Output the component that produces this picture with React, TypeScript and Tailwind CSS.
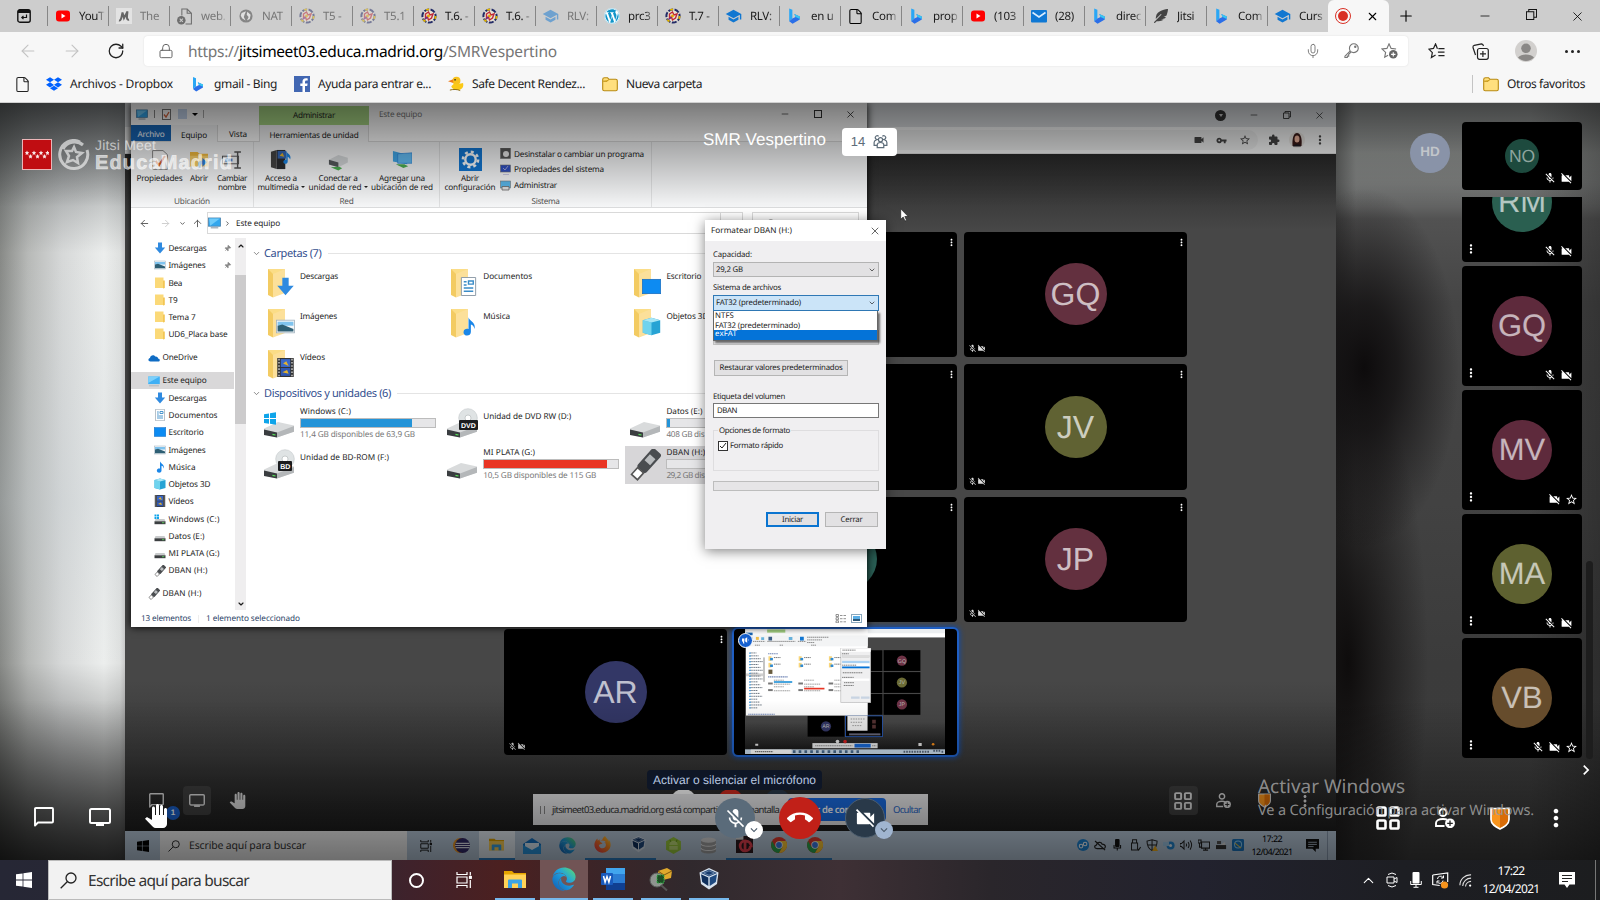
import { useLayoutEffect, useRef } from "react";
import type { ReactNode } from "react";
import {
  MdMicOff, MdVideocamOff, MdCallEnd, MdMoreVert, MdStarBorder, MdSchool, MdPanTool, MdVideocam,
  MdVpnKey, MdExtension, MdKeyboardArrowDown, MdChevronRight,
} from "react-icons/md";
import { FaDropbox, FaWordpress, FaFeatherAlt, FaEdge, FaFirefoxBrowser } from "react-icons/fa";
import { Plus, X, Minus, ArrowLeft, ArrowRight, ArrowUp, ChevronDown, ChevronUp, RotateCw, Lock, Mic, File as Page, Pin } from "lucide-react";

/* Text whose tracking is adjusted so that it fills the given width. */
function T({ w, children, className = "", drop = true }: { w: number; children: string; className?: string; drop?: boolean }) {
  const ref = useRef<HTMLSpanElement>(null);
  useLayoutEffect(() => {
    const el = ref.current;
    if (!el) return;
    el.style.letterSpacing = "0px";
    const natural = el.getBoundingClientRect().width;
    el.style.letterSpacing = `${(w - natural) / children.length}px`;
  }, [w, children]);
  return <span ref={ref} className={`inline-block shrink-0 whitespace-nowrap ${drop ? "translate-y-px" : ""} ${className}`}>{children}</span>;
}

/* ---------- small drawings ---------- */

const Bing = ({ className = "" }) => (
  <svg viewBox="0 0 16 16" className={className}>
    <path d="M3 1l3 1.2v8.2L3 13z" fill="#2aa7f5" />
    <path d="M3 13l3-2.6 3-1.4-1.2-2.8L13 8.4v3L6.2 15.4z" fill="#2b6fe8" />
    <path d="M7.8 6.2L13 8.4v2.4L9 9z" fill="#38c6f0" />
  </svg>
);
const YouTube = () => (
  <svg viewBox="0 0 16 16" className="size-4"><rect x="1" y="2.5" width="14" height="11" rx="3" fill="#f00" /><path d="M6.5 5.5v5l4-2.5z" fill="#fff" /></svg>
);
const Crest = ({ faded = false }) => (
  <svg viewBox="0 0 16 16" className={faded ? "size-4 opacity-50" : "size-4"}>
    <circle cx="8" cy="8" r="6.6" fill="#e6e2d4" stroke="#222a66" strokeWidth="2" strokeDasharray="5 1.5" />
    <circle cx="8" cy="8" r="6.6" fill="none" stroke="#e0b500" strokeWidth="1.8" strokeDasharray="3 11" />
    <path d="M4.500 6l3-2 1.500 3 3-1-1.500 4-3 2-1-3-2 1z" fill="none" stroke="#c02836" strokeWidth="1.4" />
    <circle cx="7.500" cy="8" r="1.400" fill="#e8a800" />
    <path d="M3.500 11.500l3-2.500" stroke="#6a2c8a" strokeWidth="1.400" />
  </svg>
);
const Globe = () => (
  <svg viewBox="0 0 16 16" className="size-[14px]"><circle cx="8" cy="8" r="7.500" fill="#858585" /><path d="M3 4.500L8 2.500 6.500 6 5.500 9l2 4-4-2.500-1.500-3zM9.500 3l3.800 3.500-1 5-3.300 1.500L11 9 8.800 6.500z" fill="#e0e0e0" /></svg>
);
const BadPage = () => (
  <svg viewBox="0 0 16 16" className="size-[17px]"><path d="M5.500 7V1h5l4 4v10H9M10.500 1v4h4" fill="none" stroke="#6e6e6e" /><circle cx="5" cy="11.500" r="4" fill="#6e6e6e" /><path d="M3.500 10l3 3m0-3l-3 3" stroke="#cdcdcd" /></svg>
);
const MLogo = () => (
  <svg viewBox="0 0 16 16" className="size-4"><rect width="16" height="16" fill="#e3e3e3" /><path d="M3 12.500c2 .5 2.500-3 3.500-8L8 10l3.500-6.500c-.5 4-1.500 9 1.500 8" fill="none" stroke="#666" strokeWidth="2" /></svg>
);
const Mail = () => (
  <svg viewBox="0 0 16 16" className="size-4"><rect y="2" width="16" height="12.500" rx="1" fill="#0f78d4" /><path d="M1.500 4.500L8 9l6.500-4.500" fill="none" stroke="#d8ecff" strokeWidth="1.600" /></svg>
);
const Folder = ({ className = "w-4" }) => (
  <svg viewBox="0 0 16 15" className={className}><path d="M.7 2.500q0-1.800 1.800-1.800h3l1.300 1.500h7q1.500 0 1.500 1.500v8.500q0 1.500-1.500 1.500H2.200q-1.500 0-1.500-1.500z" fill="#ffdf7e" stroke="#b98a12" strokeWidth="1.100" /><path d="M1.200 4.200h4L6.800 2.500" fill="#f2c22c" stroke="#b98a12" /></svg>
);
const Duck = () => (
  <svg viewBox="0 0 17 16" className="w-[17px]"><circle cx="9" cy="5" r="4.200" fill="#f8c21c" /><path d="M0 5.500l5.500-2v4z" fill="#ee7d1a" /><path d="M6 8.500h5l5-1c1 4-1 7.500-6 7.500-4 0-6-2-6.500-4z" fill="#fbc916" /><path d="M2 15c3-1 8-1 11 .5" stroke="#8a6a10" fill="none" /><circle cx="7.500" cy="4" r=".9" fill="#222" /></svg>
);
const Facebook = () => (
  <svg viewBox="0 0 16 16" className="size-4"><rect width="16" height="16" fill="#4267b2" /><path d="M11 16V10h2.200l.4-2.500H11V6q0-1.400 1.400-1.400h1.300V2.500C10 1.800 8.500 3.300 8.500 5.500v2H6.300V10h2.200v6z" fill="#fff" /></svg>
);
const WinLogo = ({ className = "", fill = "#fff" }) => (
  <svg viewBox="0 0 16 16" className={className} fill={fill}><path d="M0 2.300l6.600-.9v6.200H0zM7.400 1.300L16 0v7.600H7.400zM0 8.400h6.600v6.200L0 13.700zM7.400 8.400H16V16l-8.600-1.300z" /></svg>
);
const Search = ({ className = "", stroke = "#222" }) => (
  <svg viewBox="0 0 17 17" className={className} fill="none" stroke={stroke} strokeWidth="1.300"><circle cx="11" cy="6" r="5" /><path d="M7.500 9.500L.7 16.300" /></svg>
);
const TaskView = ({ className = "", stroke = "#fff" }) => (
  <svg viewBox="0 0 16 16" className={className} fill="none" stroke={stroke} strokeWidth="1.200"><path d="M1 0v2.500h10V0M1 16v-2.500h10V16M1 5h10v6H1zM14.300 0v3.500M14.300 8v8" /><rect x="13.500" y="4.500" width="1.800" height="1.800" fill={stroke} /></svg>
);
const ExplorerIcon = ({ className = "" }) => (
  <svg viewBox="0 0 22 19" className={className}><path d="M0 1h8l2 2h12v15H0z" fill="#e5a500" /><path d="M0 4.500h22V18H0z" fill="#ffd257" /><path d="M4 18v-7.500q0-1 1-1h12q1 0 1 1V18h-4v-4.500H8V18z" fill="#3aa3e6" /></svg>
);
const EdgeIcon = ({ className = "" }) => <FaEdge className={className} fill="url(#edgeFill)" />;
const Vbox = ({ className = "" }) => (
  <svg viewBox="0 0 20 22" className={className}><path d="M10 0l9.500 4.500L18 16l-8 5.500L2 16 .5 4.500z" fill="#d7e2ee" /><path d="M10 1.500L18 5l-8 3.500L2 5z" fill="#163a6c" /><path d="M2 6.200l7.300 3.300v8.500L3.200 14z" fill="#0f2f5c" /><path d="M18 6.200l-7.300 3.300v8.500l6.100-4z" fill="#1f4a80" /><path d="M4.500 5L10 2.800 15.500 5 10 7.300z" fill="none" stroke="#9db7d3" strokeWidth=".6" /></svg>
);
const Chrome = ({ className = "" }) => (
  <svg viewBox="0 0 16 16" className={className}><circle cx="8" cy="8" r="8" fill="#e33b2e" /><path d="M1.100 4A8 8 0 0 0 8 16l3.500-6H4.500z" fill="#2da94f" /><path d="M15 4H8l3.500 6L8 16A8 8 0 0 0 15 4z" fill="#fcc934" /><circle cx="8" cy="8" r="3.700" fill="#fff" /><circle cx="8" cy="8" r="2.900" fill="#3b7de8" /></svg>
);
const ChatIcon = ({ className = "" }) => (
  <svg viewBox="0 0 20 20" className={className} fill="none" stroke="currentColor" strokeWidth="1.900"><path d="M1 18.500V2q0-1 1-1h16q1 0 1 1v12.500q0 1-1 1H4z" strokeLinejoin="round" /></svg>
);
const ScreenIcon = ({ className = "" }) => (
  <svg viewBox="0 0 22 18" className={className}><rect x="1" y="1" width="20" height="14" rx="1.500" fill="none" stroke="currentColor" strokeWidth="2" /><path d="M7 15h8v3H7z" fill="currentColor" /></svg>
);
const TilesIcon = ({ className = "" }) => (
  <svg viewBox="0 0 24 24" className={className} fill="none" stroke="currentColor" strokeWidth="2.600"><rect x="1.500" y="1.500" width="8" height="8" rx="1.300" /><rect x="14.500" y="1.500" width="8" height="8" rx="1.300" /><rect x="1.500" y="14.500" width="8" height="8" rx="1.300" /><rect x="14.500" y="14.500" width="8" height="8" rx="1.300" /></svg>
);
const InviteIcon = ({ className = "" }) => (
  <svg viewBox="0 0 20 20" className={className} fill="none" stroke="currentColor" strokeWidth="1.900"><circle cx="8" cy="4.500" r="3.500" /><path d="M9.500 18H1v-3c0-2.500 3-4 7-4 1.500 0 3 .2 4 .7" /><circle cx="15" cy="15.300" r="4.900" fill="currentColor" stroke="none" /><path d="M15 12.500v5.600M12.200 15.300h5.600" stroke="#222" strokeWidth="1.300" /></svg>
);
const Shield = ({ className = "" }) => (
  <svg viewBox="0 0 20 23" className={className}><path d="M1 1.500h18v11c0 5-5 7.500-9 9.500-4-2-9-4.500-9-9.500z" fill="#f7941d" stroke="currentColor" strokeWidth="1.700" /><path d="M10 2.500h8v10c0 4-4 6.500-8 8.300z" fill="#d96c07" /></svg>
);
const PcIcon = ({ className = "" }) => (
  <svg viewBox="0 0 12 11" className={className}><rect x=".4" y=".9" width="11.200" height="7.600" fill="#33a7ee" stroke="#4a7ea6" strokeWidth=".7" /><path d="M1 1.500h10L2 8z" fill="#6fcbfa" /><path d="M2.500 10h7" stroke="#8a98a5" /></svg>
);

/* Icons of folders and drives, drawn in a 12 by 12 box */
function Glyph({ kind, className = "size-3" }: { kind: string; className?: string }) {
  return (
    <svg viewBox="0 0 12 12" className={`shrink-0 ${className}`}>
      {kind === "down" && <path d="M4 .5h4v5h3.200L6 11.500.8 5.500H4z" fill="#2f8ae0" />}
      {kind === "image" && <><rect x=".3" y="2" width="11.400" height="8" fill="#f3f6f8" stroke="#9fb0bd" strokeWidth=".5" /><path d="M1 3h10v2.500H1z" fill="#7fc3ee" /><path d="M1 5.500l3-.8 7 2.800v1.700H1z" fill="#2e5f74" /></>}
      {kind === "folder" && <><path d="M1 .5h8.500V11H1z" fill="#fbd978" /><path d="M9 3.500h1.800V11L9 11.400z" fill="#f3c654" /></>}
      {kind === "cloud" && <path d="M2.500 9.500C0 9.500-.3 6.500 2 6c.3-3 4-3.800 5.200-1.500C9.500 4.200 10.300 6 10 6.500c2.300.2 2.300 3 .3 3z" fill="#0f6cc4" />}
      {kind === "pc" && <><rect x=".2" y="1.500" width="11.600" height="7.600" fill="#3fb0f5" /><path d="M.2 1.500h11.600L.2 8z" fill="#7cd0fb" /><path d="M1 10.800h10" stroke="#a8b0b8" strokeWidth=".8" /></>}
      {kind === "doc" && <><path d="M1.500.3h9v11.400h-9z" fill="#fff" stroke="#8a98a5" strokeWidth=".6" /><path d="M3 3h1.800M6 2.500h3v2H6zM3 5h1.800M3 7h6M3 9h6" stroke="#3a8cc8" strokeWidth=".9" fill="none" /></>}
      {kind === "desk" && <rect x=".2" y="1.500" width="11.600" height="9" fill="#0d8bf2" stroke="#1a6fc0" strokeWidth=".5" />}
      {kind === "music" && <path d="M6 .2c.5 2.300 5 3.300 3.700 7.300-.2-1.700-1-2.500-2.200-2.800V9.500c0 3.200-5.200 2.800-4.600-.2.200-1.600 1.700-2.100 3.100-1.700z" fill="#1a86e8" />}
      {kind === "cube" && <><path d="M.5 2L6 .5 11.500 2v8L6 11.500.5 10z" fill="#27a3d4" /><path d="M.5 2L6 3.500V11.500L.5 10z" fill="#6fd3ee" /><path d="M.5 2L6 .5 11.500 2 6 3.500z" fill="#a7e6f5" /></>}
      {kind === "video" && <><rect x=".8" width="10.400" height="12" fill="#333" /><rect x="3" y=".7" width="6" height="5" fill="#3a68c8" /><rect x="3" y="6.300" width="6" height="5" fill="#2f57b0" /><path d="M4.500 3.500l2-1.500 1.500 3zM4 9l3-1.500L8 10z" fill="#e5b32c" /><path d="M1.900.5v11M10.100.5v11" stroke="#ddd" strokeWidth=".8" strokeDasharray="1 1" /></>}
      {(kind === "drive" || kind === "windrive") && <><path d="M1.500 6h9l1 2.500H.5z" fill="#c9cbcc" /><path d="M.5 8.300h11v2.900H.5z" fill="#3c3f41" /><path d="M8 9.700h2.300" stroke="#5be05b" strokeWidth=".8" /></>}
      {kind === "windrive" && <path d="M.5 1.500h2v2h-2zM3 1.500h2v2H3zM.5 4h2v2h-2zM3 4h2v2H3z" fill="#10a4ea" />}
      {kind === "usb" && <g transform="rotate(42 6 6)"><rect x="3.900" y="-1" width="4.400" height="9.500" rx="1" fill="#4a4d50" /><rect x="4.700" y="1.800" width="2.800" height="3" fill="#b9bcbe" /><path d="M4.600 8.600h3V12H4.600z" fill="#fff" stroke="#555" strokeWidth=".6" /></g>}
    </svg>
  );
}
const BigFolder = ({ kind }: { kind: string }) => (
  <div className="relative h-[30px] w-7">
    <svg viewBox="0 0 28 30" className="h-[30px] w-7"><path d="M1 1h17v24H4z" fill="#fbdd87" /><path d="M1 1l5 5v23.500L1 27z" fill="#f3cb62" /><path d="M6 6L18 1v24L6 29.500z" fill="#fce09a" /></svg>
    <Glyph kind={kind} className="absolute bottom-0.5 right-0 size-[19px]" />
  </div>
);
function BigDrive({ kind }: { kind: string }) {
  if (kind === "usb") return <Glyph kind="usb" className="size-8" />;
  return (
    <svg viewBox="0 0 32 30" className="h-[30px] w-8">
      {(kind === "DVD" || kind === "BD") && <><circle cx="22" cy="10" r="9.300" fill="#dfe3e4" stroke="#c3c8ca" strokeWidth=".6" /><circle cx="22" cy="10" r="3" fill="#fff" stroke="#b5babc" strokeWidth=".7" /></>}
      <path d="M1 20.500l14-6.500 16 3.500v6L14 29.500 1 26.500z" fill="#d9dbdc" />
      <path d="M1 21.500l13 3V29.500L1 27z" fill="#3a3d40" /><path d="M14 24.500l17-6.500v5.800L14 29.500z" fill="#b4b7b9" /><path d="M9.500 26.300l3 .7" stroke="#58e058" strokeWidth="1.200" />
      {kind === "win" && <path d="M1 6.200l5-.8V10H1zM7 5.200l6-.9V10H7zM1 11h5v4.700l-5-.8zM7 11h6v5.700l-6-.9z" fill="#0fa5ea" />}
      {(kind === "DVD" || kind === "BD") && <><rect x={kind === "DVD" ? 13 : 15} y="12" width={kind === "DVD" ? 19 : 14} height="10" rx="1" fill="#1b1c1e" /><text x="22.300" y="19.600" fontSize="7" fill="#fff" textAnchor="middle" fontFamily="Liberation Sans, sans-serif" fontWeight="bold">{kind}</text></>}
    </svg>
  );
}

/* ---------- browser chrome ---------- */

const tabs: [ReactNode, string, boolean][] = [
  [<YouTube />, "YouT", false], [<MLogo />, "The", true], [<BadPage />, "web.", true], [<Globe />, "NAT", true],
  [<Crest faded />, "T5 -", true], [<Crest faded />, "T5.1", true], [<Crest />, "T.6. -", false], [<Crest />, "T.6. -", false],
  [<MdSchool className="size-[18px] text-[#1177d1] opacity-50" />, "RLV:", true],
  [<FaWordpress className="size-4 rounded-full bg-white text-[#1195c9]" />, "prc3", false], [<Crest />, "T.7 -", false],
  [<MdSchool className="size-[18px] text-[#1177d1]" />, "RLV:", false], [<Bing className="size-[18px]" />, "en u", false],
  [<Page className="size-[17px]" strokeWidth={1.5} />, "Com", false], [<Bing className="size-[18px]" />, "prop", false],
  [<YouTube />, "(103", false], [<Mail />, "(28)", false], [<Bing className="size-[18px]" />, "direc", false],
  [<FaFeatherAlt className="size-[14px] text-[#444]" />, "Jitsi", false], [<Bing className="size-[18px]" />, "Com", false],
  [<MdSchool className="size-[18px] text-[#1177d1]" />, "Curs", false],
];

const TabStrip = () => (
  <div className="flex h-8 shrink-0 items-center bg-[#cdcdcd] pl-[17px]">
    <svg viewBox="0 0 14 14" className="mr-4 size-3.5"><rect x=".8" y=".8" width="12.400" height="12.400" rx="2" fill="none" stroke="#111" strokeWidth="1.400" /><path d="M1 1h12v3H1z" fill="#111" /><path d="M9.500 5.500v3H5M6.500 6.800L4.800 8.500l1.700 1.700" fill="none" stroke="#111" strokeWidth="1.200" /></svg>
    {tabs.map(([icon, label, dim], i) => (
      <div key={i} className="flex h-5 w-[61px] shrink-0 items-center border-l border-[#868686] pl-1.5">
        <span className="flex w-[17px] shrink-0 justify-center">{icon}</span>
        <span className={`ml-2 w-[26px] overflow-hidden whitespace-nowrap pt-px text-[11.5px] tracking-tight [mask-image:linear-gradient(to_right,#000_70%,transparent)] ${dim ? "text-[#777]" : "text-[#1a1a1a]"}`}>{label}</span>
      </div>
    ))}
    <div className="flex h-8 w-[61px] shrink-0 items-center rounded-t-md bg-[#f7f7f7] pl-[7px]">
      <span className="flex size-4 items-center justify-center rounded-full border border-[#d93025]"><span className="size-[10px] rounded-full bg-[#d93025]" /></span>
      <X className="ml-[15px] size-[13px]" strokeWidth={2} />
    </div>
    <Plus className="ml-2 size-[18px]" strokeWidth={1.5} />
    <div className="ml-auto flex">
      <span className="flex w-[46px] justify-center"><Minus className="size-3.5" strokeWidth={1.300} /></span>
      <span className="flex w-[46px] justify-center"><svg viewBox="0 0 12 12" className="size-[11px]" fill="none" stroke="#111"><path d="M.5 3h8v8.500h-8zM3 3V.5h8.500V9H9" strokeWidth="1.100" /></svg></span>
      <span className="flex w-[46px] justify-center"><X className="size-[15px]" strokeWidth={1.300} /></span>
    </div>
  </div>
);

const Toolbar = () => (
  <div className="flex h-[34px] shrink-0 items-center pl-1.5 pr-1.5 pt-1">
    <span className="flex w-11 justify-center text-[#c3c3c3]"><ArrowLeft className="size-5" strokeWidth={1.300} /></span>
    <span className="flex w-11 justify-center text-[#c3c3c3]"><ArrowRight className="size-5" strokeWidth={1.300} /></span>
    <span className="flex w-11 justify-center text-[#222]"><RotateCw className="size-[18px]" strokeWidth={1.700} /></span>
    <div className="ml-1.5 flex h-[30px] flex-1 items-center rounded bg-white shadow-[0_0_2px_#ddd]">
      <Lock className="ml-[14px] size-4 text-[#666]" strokeWidth={1.500} />
      <div className="ml-[14px] flex text-[15.5px]">
        <T w={51} className="text-[#767676]">https://</T><T w={204} className="text-black">jitsimeet03.educa.madrid.org</T><T w={114} className="text-[#767676]">/SMRVespertino</T>
      </div>
      <div className="ml-auto flex text-[#767676]">
        <span className="flex w-[38px] justify-center"><Mic className="size-4" strokeWidth={1.400} /></span>
        <span className="flex w-[38px] justify-center"><svg viewBox="0 0 16 16" className="size-[15px]" fill="none" stroke="currentColor" strokeWidth="1.200"><circle cx="10.500" cy="5.500" r="4.700" /><circle cx="12" cy="4" r=".7" /><path d="M6.700 8.300L1 14v1.500h2.500V14H5v-2l2.700-2.500" /></svg></span>
        <span className="flex w-[38px] justify-center"><svg viewBox="0 0 18 17" className="w-[17px]" fill="none" stroke="currentColor" strokeWidth="1.200"><path d="M16 6.300L10.700 5.700 8.500.9 6.300 5.700 1 6.300l3.900 3.600-1 5.200 3.600-2" /><circle cx="13" cy="12" r="4.500" fill="#666" stroke="none" /><path d="M13 9.700v4.600M10.700 12h4.600" stroke="#fff" /></svg></span>
      </div>
    </div>
    <span className="ml-1.5 flex w-11 justify-center"><svg viewBox="0 0 18 17" className="w-[17px]" fill="none" stroke="#222" strokeWidth="1.300"><path d="M10 6L8 1 5.800 5.800 1 6.500l3.600 3.700-1 5.200L8 12.800M11 6h6.500M10.500 9.700h7M11 13.400h6.500" /></svg></span>
    <span className="flex w-11 justify-center"><svg viewBox="0 0 17 17" className="w-[17px]" fill="none" stroke="#222" strokeWidth="1.200"><rect x="5.500" y="5.500" width="10.800" height="10.800" rx="2" /><path d="M10.900 8v6M8 10.900h6M3.500 12L1 4.500Q.7 2.800 2.300 2.300L9.500.8Q11 .7 11.500 3" /></svg></span>
    <span className="ml-0.5 flex w-11 justify-center"><svg viewBox="0 0 22 22" className="w-[22px]"><circle cx="11" cy="11" r="11" fill="#d2d0ce" /><circle cx="11" cy="8.300" r="4.800" fill="#8a8886" /><path d="M3 17.500c3-4 13-4 16 0a11 11 0 0 1-16 0z" fill="#8a8886" /></svg></span>
    <span className="ml-0.5 flex w-11 justify-center gap-[3px]"><i className="size-[3px] rounded-full bg-[#222]" /><i className="size-[3px] rounded-full bg-[#222]" /><i className="size-[3px] rounded-full bg-[#222]" /></span>
  </div>
);

const bookmarks: [ReactNode, string, number][] = [
  [<FaDropbox className="size-4 text-[#0061ff]" />, "Archivos - Dropbox", 103],
  [<Bing className="size-[18px]" />, "gmail - Bing", 63],
  [<Facebook />, "Ayuda para entrar e...", 113],
  [<Duck />, "Safe Decent Rendez...", 113],
  [<Folder />, "Nueva carpeta", 76],
];
const Bookmarks = () => (
  <div className="flex h-9 shrink-0 items-center pl-[14px] pr-[15px] text-[12px] text-[#222]">
    <Page className="mr-[15px] size-[17px]" strokeWidth={1.500} />
    <div className="flex gap-[17px]">
      {bookmarks.map(([icon, label, w]) => (
        <div key={label} className="flex items-center gap-2"><span className="flex w-4 justify-center">{icon}</span><T w={w} drop={false}>{label}</T></div>
      ))}
    </div>
    <div className="ml-auto flex items-center gap-2 border-l border-[#c4c4c4] pl-2.5"><Folder /><T w={78} drop={false}>Otros favoritos</T></div>
  </div>
);

/* ---------- file explorer in the shared screen ---------- */

function RibbonButton({ w, icon, lines, arrow = false }: { w: string; icon: ReactNode; lines: [string, number][]; arrow?: boolean }) {
  return (
    <div className={`flex shrink-0 flex-col items-center ${w}`}>
      <div className="flex h-[23px] items-center">{icon}</div>
      <div className="mt-[2px] flex flex-col items-center leading-[9.4px]">
        {lines.map(([text, width], i) => (
          <div key={text} className="flex items-center gap-[2px]">
            <T w={width}>{text}</T>
            {arrow && i === 1 && <i className="border-x-2 border-t-[2.5px] border-x-transparent border-t-[#222]" />}
          </div>
        ))}
      </div>
    </div>
  );
}
const GroupLabel = ({ w, children }: { w: number; children: string }) => (
  <div className="mt-auto flex h-[11px] items-center justify-center text-[#555]"><T w={w}>{children}</T></div>
);

const navItems: [string, string, number, number][] = [
  ["down", "Descargas", 38, 2], ["image", "Imágenes", 37, 2], ["folder", "Bea", 13.5, 1], ["folder", "T9", 9, 1], ["folder", "Tema 7", 27, 1],
  ["folder", "UD6_Placa base", 59, 1], ["cloud", "OneDrive", 35, 0], ["pc", "Este equipo", 44, 0], ["down", "Descargas", 38, 1],
  ["doc", "Documentos", 49, 1], ["desk", "Escritorio", 35, 1], ["image", "Imágenes", 37, 1], ["music", "Música", 27, 1], ["cube", "Objetos 3D", 42, 1],
  ["video", "Vídeos", 25, 1], ["windrive", "Windows (C:)", 51, 1], ["drive", "Datos (E:)", 36, 1], ["drive", "MI PLATA (G:)", 51, 1],
  ["usb", "DBAN (H:)", 39, 1], ["usb", "DBAN (H:)", 39, 0],
];
const folders: [string, string, number][] = [
  ["down", "Descargas", 38], ["doc", "Documentos", 49], ["desk", "Escritorio", 35], ["image", "Imágenes", 37], ["music", "Música", 27],
  ["cube", "Objetos 3D", 42], ["video", "Vídeos", 25],
];
type Drive = { kind: string; name: string; w: number; free?: string; fw?: number; fill?: string; sel?: boolean };
const drives: Drive[] = [
  { kind: "win", name: "Windows (C:)", w: 51, free: "11,4 GB disponibles de 63,9 GB", fw: 115, fill: "w-[111px] bg-[#2494d8]" },
  { kind: "DVD", name: "Unidad de DVD RW (D:)", w: 88 },
  { kind: "plain", name: "Datos (E:)", w: 36, free: "408 GB dis", fw: 38, fill: "w-[3px] bg-[#2494d8]" },
  { kind: "BD", name: "Unidad de BD-ROM (F:)", w: 89 },
  { kind: "plain", name: "MI PLATA (G:)", w: 52, free: "10,5 GB disponibles de 115 GB", fw: 113, fill: "w-[123px] bg-[#e93524]" },
  { kind: "usb", name: "DBAN (H:)", w: 39, free: "29,2 GB dis", fw: 38, fill: "w-0", sel: true },
];
const SectionHeader = ({ text, w }: { text: string; w: number }) => (
  <div className="flex h-5 items-center pl-1.5 text-[11px] text-[#34508f]">
    <ChevronDown className="mr-[3px] size-[9px] text-[#666]" strokeWidth={2} /><T w={w}>{text}</T><i className="ml-1.5 h-px flex-1 bg-[#e4e4e4]" />
  </div>
);

const Explorer = () => (
  <div className="absolute left-1.5 top-0 flex h-[524px] w-[736px] flex-col overflow-hidden bg-white text-[8.2px] text-[#1c1c1c] shadow-[0_0_8px_#000]">
    <div className="flex h-[22px] shrink-0 items-center pl-[5px] text-[#777]">
      <PcIcon className="w-3" />
      <i className="ml-1.5 h-2 w-px bg-[#888]" />
      <svg viewBox="0 0 9 11" className="ml-[7px] w-[9px]"><rect x=".5" y=".5" width="8" height="10" fill="#fff" stroke="#777" /><path d="M2 5.500l2 2.500 3-5" fill="none" stroke="#d8643c" strokeWidth="1.300" /></svg>
      <i className="ml-[7px] h-2.5 w-[9px] bg-[#c5d6ee]" />
      <i className="ml-[5px] border-x-[3px] border-t-[3px] border-x-transparent border-t-black" />
      <i className="ml-[5px] h-2 w-px bg-[#aaa]" />
      <div className="ml-[55px] flex h-[19px] w-[110px] items-center justify-center self-end bg-[#a6d483] text-[#222]"><T w={42}>Administrar</T></div>
      <T w={43} className="ml-2.5">Este equipo</T>
      <div className="ml-auto flex text-[#222]">
        <span className="flex w-[33px] justify-center"><Minus className="size-2.5" strokeWidth={1.500} /></span>
        <span className="flex w-[33px] items-center justify-center"><i className="size-2 border border-[#333]" /></span>
        <span className="flex w-[33px] justify-center"><X className="size-[11px]" strokeWidth={1.700} /></span>
      </div>
    </div>
    <div className="flex h-[17px] shrink-0 border-b border-[#dcdcdc] leading-[13px]">
      <div className="flex w-10 items-center justify-center bg-[#1765b5] pt-px text-white"><T w={27}>Archivo</T></div>
      <div className="-mb-px flex w-[47px] items-center justify-center border-r border-[#dcdcdc] bg-[#f5f6f7] pt-px"><T w={26}>Equipo</T></div>
      <div className="flex w-10 items-center justify-center pt-px"><T w={18}>Vista</T></div>
      <div className="-mb-px ml-px flex w-[110px] items-center justify-center border-x border-[#dcdcdc] bg-[#f5f6f7] pt-px"><T w={89}>Herramientas de unidad</T></div>
    </div>
    <div className="flex h-[66px] shrink-0 border-b border-[#dadbdc] bg-[#f5f6f7]">
      <div className="flex w-[123px] flex-col border-r border-[#dfe0e1] pt-1.5">
        <div className="flex">
          <RibbonButton w="w-[57px]" lines={[["Propiedades", 46]]} icon={<svg viewBox="0 0 16 20" className="h-5"><path d="M.6.6H11l4.400 4v14.800H.6z" fill="#fff" stroke="#888" /><path d="M3.500 11l3.500 4 6-9" fill="none" stroke="#e0642d" strokeWidth="2" /></svg>} />
          <RibbonButton w="w-[22px]" lines={[["Abrir", 18]]} icon={<svg viewBox="0 0 20 19" className="h-[18px]"><path d="M0 1h8l2 2h10v13H0z" fill="#f5bd3f" /><path d="M0 5h20v11H0z" fill="#ffd56b" /><path d="M9 18v-5q0-3 4-3V7l5 5-5 4.500V14q-2 0-2 4z" fill="#2b83d8" /></svg>} />
          <RibbonButton w="w-[44px]" lines={[["Cambiar", 30], ["nombre", 28]]} icon={<svg viewBox="0 0 21 19" className="h-[18px]" fill="none" stroke="#555"><rect x=".5" y="5.500" width="17" height="8" /><path d="M3 9.500h8" stroke="#2b83d8" strokeWidth="3" /><path d="M13 1h7M13 18h7M16.500 1v17" strokeWidth="1.500" /></svg>} />
        </div>
        <GroupLabel w={36}>Ubicación</GroupLabel>
      </div>
      <div className="flex w-[186px] flex-col border-r border-[#dfe0e1] pt-1.5">
        <div className="flex">
          <RibbonButton w="w-[54px]" arrow lines={[["Acceso a", 32], ["multimedia", 41]]} icon={<svg viewBox="0 0 23 23" className="h-[22px]"><path d="M1 3l6-2v20l-6-2z" fill="#444" /><path d="M7 1h9v20H7z" fill="#2b2d30" /><rect x="8" y="2" width="9" height="8" fill="#3568b8" /><path d="M10 7l3-3 2 4z" fill="#e5b32c" /><path d="M17 2c1 3 6 4 4 9-.5-2-1.500-2.500-2.500-3v5c0 3.500-5 3-4.500 0 .3-1.500 2-2 3-1.600z" fill="#1a86e8" /></svg>} />
          <RibbonButton w="w-[60px]" arrow lines={[["Conectar a", 39], ["unidad de red", 53]]} icon={<svg viewBox="0 0 22 18" className="mt-1.5 h-[17px]"><path d="M1 6l10-5 10 3v5l-10 5L1 11z" fill="#d5d8da" /><path d="M1 6l10 3v5L1 11z" fill="#55595c" /><path d="M3 14l8 3.500 4-2.500-3-1.500" fill="#4cb052" /></svg>} />
          <RibbonButton w="w-[68px]" lines={[["Agregar una", 46], ["ubicación de red", 62]]} icon={<svg viewBox="0 0 22 20" className="h-[19px]"><path d="M1 1l15 4v10L1 12z" fill="#41a8ea" /><path d="M6 4l15-1v11L6 14z" fill="#63bdf5" stroke="#2b83d8" strokeWidth=".7" /><path d="M4 15l8 4 5-2-4-2z" fill="#4cb052" /></svg>} />
        </div>
        <GroupLabel w={14}>Red</GroupLabel>
      </div>
      <div className="flex w-[212px] flex-col border-r border-[#dfe0e1]">
        <div className="flex">
          <div className="pt-1.5"><RibbonButton w="w-[60px]" lines={[["Abrir", 18], ["configuración", 51]]} icon={<svg viewBox="0 0 23 23" className="h-[23px]"><rect width="23" height="23" fill="#1277d3" /><circle cx="11.500" cy="11.500" r="5.200" fill="none" stroke="#fff" strokeWidth="2.400" /><circle cx="11.500" cy="11.500" r="7.600" fill="none" stroke="#fff" strokeWidth="2.600" strokeDasharray="3 2.970" /></svg>} /></div>
          <div className="flex flex-col pt-1">
            {([["Desinstalar o cambiar un programa", 130], ["Propiedades del sistema", 90], ["Administrar", 43]] as [string, number][]).map(([text, w], i) => (
              <div key={text} className="flex h-[15.7px] items-center gap-[3px]">
                <svg viewBox="0 0 11 11" className="size-[11px]"><rect x=".5" y={i ? 1 : 0} width="10" height={i ? 7 : 10.500} fill={i === 0 ? "#555" : i === 1 ? "#2f4fbf" : "#58b5e8"} stroke="#777" strokeWidth=".6" />{i === 0 ? <circle cx="6" cy="6" r="3" fill="#e8e8e8" /> : <path d={i === 1 ? "M3 10.500h6M3 4l2 2 3-4" : "M2 10V6.500h7V10z"} fill={i === 1 ? "none" : "#ddd"} stroke={i === 1 ? "#bbd" : "#666"} strokeWidth=".8" />}</svg>
                <T w={w}>{text}</T>
              </div>
            ))}
          </div>
        </div>
        <GroupLabel w={28}>Sistema</GroupLabel>
      </div>
    </div>
    <div className="flex h-[30px] shrink-0 items-start pl-[3px] pt-1">
      <div className="flex h-[22px] items-center text-[#555]">
        <span className="flex w-5 justify-center"><ArrowLeft className="size-[11px]" /></span>
        <span className="flex w-[22px] justify-center text-[#ccc]"><ArrowRight className="size-[11px]" /></span>
        <span className="flex w-3 justify-center"><ChevronDown className="size-[7px]" strokeWidth={3} /></span>
        <span className="flex w-[19px] justify-center"><ArrowUp className="size-[11px]" /></span>
      </div>
      <div className="flex h-[22px] w-[536px] items-center border border-[#d9d9d9]">
        <PcIcon className="w-[13px]" /><ChevronDown className="ml-[3px] size-[7px] -rotate-90 text-[#555]" strokeWidth={3} /><T w={44} className="ml-[5px]">Este equipo</T>
        <i className="ml-auto h-full w-[22px] border-l border-[#d9d9d9]" />
      </div>
      <div className="ml-[9px] flex h-[22px] w-[107px] items-center border border-[#d9d9d9] pl-3"><Search className="size-[9px]" stroke="#777" /></div>
    </div>
    <div className="flex min-h-0 flex-1">
      <div className="w-[103px] shrink-0 pt-[1.500px]">
        {navItems.map(([kind, label, w, level], i) => (
          <div key={i} className={`flex h-[17.280px] items-center ${level ? "pl-[22.500px]" : "mt-[5.800px] pl-[16.500px]"} ${label === "Este equipo" ? "bg-[#d9d8d9]" : ""}`}>
            <Glyph kind={kind} className="mr-[3px] size-3" /><T w={w}>{label}</T>
            {level === 2 && <Pin className="ml-auto mr-[3px] size-[7px] rotate-45 fill-[#888] text-[#888]" />}
          </div>
        ))}
      </div>
      <div className="ml-px flex w-[11px] shrink-0 flex-col items-center bg-[#efeeef]">
        <ChevronUp className="mt-1 size-2 shrink-0" strokeWidth={3.500} />
        <i className="mt-[25px] h-[149px] w-full bg-[#cccbcc]" />
        <ChevronDown className="mb-0.5 mt-auto size-2 shrink-0" strokeWidth={3.500} />
      </div>
      <div className="min-w-0 flex-1 overflow-hidden pt-[5px]">
        <SectionHeader text="Carpetas (7)" w={57.500} />
        <div className="grid w-[550px] grid-cols-[183.200px_183.200px_183.200px] pl-[13px]">
          {folders.map(([kind, label, w]) => (
            <div key={label} className="flex h-[40.400px] pl-2 pt-[5px]"><BigFolder kind={kind} /><T w={w} className="ml-[5px] mt-[2px] leading-3">{label}</T></div>
          ))}
        </div>
        <div className="-mt-px"><SectionHeader text="Dispositivos y unidades (6)" w={127} /></div>
        <div className="grid w-[550px] grid-cols-[183.200px_183.200px_183.200px] pl-[13px]">
          {drives.map((d) => (
            <div key={d.name} className={`flex h-[40.400px] border-t-2 border-transparent bg-clip-padding pl-1 ${d.sel ? "bg-[#d7d6d8]" : ""}`}>
              <div className="pt-[3px]"><BigDrive kind={d.kind} /></div>
              <div className={`ml-[5px] flex flex-col items-start ${d.free ? "" : "pt-[5px]"}`}>
                <T w={d.w} className="leading-3">{d.name}</T>
                {d.free && <>
                  <div className="mt-px h-[10px] w-[136px] border border-[#bcbcbc] bg-[#e6e6e8]"><div className={`h-full ${d.fill}`} /></div>
                  <T w={d.fw!} drop={false} className="leading-[13px] text-[#777]">{d.free}</T>
                </>}
              </div>
            </div>
          ))}
        </div>
      </div>
    </div>
    <div className="flex h-[17px] shrink-0 items-center pl-2.5 pr-[5px] text-[#2a3f66]">
      <T w={50}>13 elementos</T><i className="mx-[7px] h-2 w-px bg-[#eee]" /><T w={94}>1 elemento seleccionado</T>
      <svg viewBox="0 0 12 9" className="ml-auto w-3" fill="none" stroke="#777" strokeWidth=".8"><path d="M1 .5h2.500v2H1zM1 3.700h2.500v2H1zM1 6.800h2.500v2H1zM5 1.500h2.500M8.500 1.500H11M5 4.700h2.500M8.500 4.700H11M5 7.800h2.500M8.500 7.800H11" /></svg>
      <svg viewBox="0 0 11 9" className="ml-1 w-[11px]"><rect x=".5" y=".5" width="10" height="8" fill="#fff" stroke="#8aa8bd" /><path d="M2 2h7v3H2z" fill="#5aaee6" /><path d="M2 5h7v2H2z" fill="#2c5878" /></svg>
    </div>
  </div>
);

const FormatDialog = () => (
  <div className="absolute left-[580px] top-[117px] flex h-[329px] w-[181px] flex-col bg-[#f0eff1] text-[7.8px] text-[#1c1c1c] shadow-[0_2px_12px_rgba(0,0,0,0.5)]">
    <div className="flex h-[21px] items-center justify-between bg-white pl-1.5 pr-[5px]"><T w={81} className="text-[8.2px]">Formatear DBAN (H:)</T><X className="size-[12px] text-[#333]" strokeWidth={1.500} /></div>
    <div className="flex flex-col pl-2 pr-[7px]">
      <T w={39} className="mt-2 self-start leading-[10px]">Capacidad:</T>
      <div className="mt-[3px] flex h-[15px] items-center justify-between border border-[#b3b3b3] bg-[#e2e1e3] px-[2px]"><T w={27}>29,2 GB</T><ChevronDown className="size-2" /></div>
      <T w={68} className="mt-[5px] self-start leading-[10px]">Sistema de archivos</T>
      <div className="relative mt-[3px]">
        <div className="flex h-4 items-center justify-between border border-[#2f78b5] bg-[#cbe4f8] px-[2px]"><T w={85}>FAT32 (predeterminado)</T><ChevronDown className="size-2" /></div>
        <div className="absolute left-0 top-4 z-10 w-[165px] border-x border-b border-[#666] bg-white leading-[9.500px] shadow-[2px_2px_2px_rgba(0,0,0,0.55)]">
          <div className="flex h-[9.500px] items-center pl-px"><T w={19}>NTFS</T></div>
          <div className="flex h-[9.500px] items-center pl-px"><T w={85}>FAT32 (predeterminado)</T></div>
          <div className="flex h-[9.500px] items-center bg-[#0473d8] pl-px text-white"><T w={22} drop={false}>exFAT</T></div>
        </div>
      </div>
      <div className="mt-[19px] h-[15px] border border-[#c3c3c3] bg-[#e6e5e7]" />
      <div className="ml-px mt-[15px] flex h-4 w-[134px] items-center justify-center border border-[#b5b5b5] bg-[#e2e1e3]"><T w={123}>Restaurar valores predeterminados</T></div>
      <T w={72} className="mt-[15px] self-start leading-[10px]">Etiqueta del volumen</T>
      <div className="mt-[2px] flex h-[15px] items-center border border-[#777] bg-white pl-[3px]"><T w={20}>DBAN</T></div>
      <div className="mt-3 h-[41px] border border-[#dedddf] px-1">
        <div className="-mt-[5px] flex"><T w={73} className="bg-[#f0eff1] px-px leading-[9px]">Opciones de formato</T></div>
        <div className="mt-[5px] flex items-center gap-[2px]"><span className="flex size-[10px] items-center justify-center border border-[#333] bg-white"><svg viewBox="0 0 8 8" className="size-2"><path d="M1 4l2 2 4-5" fill="none" stroke="#222" /></svg></span><T w={53}>Formato rápido</T></div>
      </div>
      <div className="mt-2.5 h-2.5 border border-[#bdbdbd] bg-[#e6e5e7]" />
      <div className="mt-[21px] flex justify-end gap-1.5 pr-px">
        <div className="flex h-[15px] w-[53px] items-center justify-center border-2 border-[#0a74d0] bg-[#e2e1e3]"><T w={21}>Iniciar</T></div>
        <div className="flex h-[15px] w-[53px] items-center justify-center border border-[#b5b5b5] bg-[#e2e1e3]"><T w={22}>Cerrar</T></div>
      </div>
    </div>
  </div>
);

/* ---------- shared screen ---------- */

function Tile({ text = "", color = "", icons = true }: { text?: string; color?: string; icons?: boolean }) {
  return (
    <div className="relative flex h-[125.500px] w-[223px] shrink-0 items-center justify-center rounded bg-black">
      {color && <div className={`flex size-[62px] items-center justify-center rounded-full font-['Liberation_Sans',sans-serif] text-[32px] text-white/70 ${color}`}>{text}</div>}
      <MdMoreVert className="absolute right-0 top-[5px] size-[11px] text-white" />
      {icons && <div className="absolute bottom-1 left-1 flex text-[#ddd]"><MdMicOff className="size-[9px]" /><MdVideocamOff className="size-[9px]" /></div>}
    </div>
  );
}

/* Thumbnail of the shared desktop, in desktop coordinates */
const Thumbnail = () => (
  <svg viewBox="0 0 1211 757" className="h-[125px] w-[200px]" preserveAspectRatio="none" fontFamily="Liberation Sans, sans-serif">
    <rect width="1211" height="757" fill="#474747" /><rect y="560" width="1211" height="170" fill="url(#thumbShade)" />
    <rect width="1211" height="50" fill="#eceff1" /><rect y="26" width="1211" height="24" fill="#fff" />
    {[[839, 128, "#6e3346", "GQ"], [839, 261, "#6b6b35", "JV"], [839, 394, "#6e3346", "JP"], [379, 526, "#333766", "AR"]].map(([x, y, c, t]) => (
      <g key={t as string}><rect x={x} y={y} width="223" height="126" fill="#000" /><circle cx={Number(x) + 111} cy={Number(y) + 63} r="31" fill={c as string} /><text x={Number(x) + 111} y={Number(y) + 75} fontSize="32" fill="#bbb" textAnchor="middle">{t}</text></g>
    ))}
    <path d="M740 128h92v126h-92zM740 261h92v126h-92zM740 394h92v126h-92z" fill="#000" />
    <rect x="609" y="526" width="223" height="126" fill="#000" stroke="#2a5fc0" strokeWidth="5" /><rect x="620" y="526" width="122" height="90" fill="#eee" /><rect x="630" y="632" width="190" height="12" fill="#667" /><path d="M770 550h22v22h-22zM770 580h22v22h-22z" fill="#533" /><path d="M640 545h90M640 565h70M650 585h60" stroke="#999" strokeWidth="6" strokeDasharray="9 6" />
    <rect x="6" width="737" height="524" fill="#fff" /><rect x="134" y="3" width="110" height="19" fill="#a6d483" /><rect x="6" y="22" width="40" height="17" fill="#1765b5" /><rect x="6" y="39" width="737" height="66" fill="#f3f4f5" />
    <path d="M28 50h16v18H28zM142 47h22v22h-22z" fill="#3c5f86" /><path d="M66 48h18v18H66z" fill="#f0bd4a" /><path d="M265 49h22v18h-22zM98 50h18v16H98z" fill="#68b2dc" /><path d="M333 47h23v23h-23z" fill="#1277d3" />
    <path d="M12 75h110M135 75h170M320 75h50M376 50h130M376 66h90M376 82h43M60 98h30M210 98h20M400 98h30" stroke="#8a8a8a" strokeWidth="6" strokeDasharray="9 3" />
    <rect x="6" y="269" width="103" height="17" fill="#d0d0d0" /><rect x="109" y="172" width="12" height="148" fill="#c4c4c4" />
    {Array.from({ length: 20 }, (_, i) => <path key={i} d={`M33 ${145 + i * 17.500}h${36 + ((i * 13) % 40)}`} stroke="#6b7480" strokeWidth="6" strokeDasharray="8 3" />)}
    <path d="M30 142v340" stroke="#3494dc" strokeWidth="9" strokeDasharray="8 9.500" />
    <path d="M140 150h60M140 290h120M20 516h160" stroke="#7085b5" strokeWidth="7" strokeDasharray="8 3" />
    {[0, 1, 2].map((c) => [0, 1].map((r) => <g key={`${c}${r}`}><rect x={142 + c * 183} y={165 + r * 40} width="18" height="28" fill="#f8d67c" /><rect x={152 + c * 183} y={175 + r * 40} width="17" height="15" fill="#2f8ad2" /><path d={`M${175 + c * 183} ${173 + r * 40}h40`} stroke="#777" strokeWidth="6" strokeDasharray="8 3" /><path d={`M${140 + c * 183} ${330 + r * 40}h28`} stroke="#777" strokeWidth="12" /><path d={`M${175 + c * 183} ${310 + r * 40}h60M${175 + c * 183} ${334 + r * 40}h100`} stroke="#888" strokeWidth="5" strokeDasharray="8 3" /></g>))}
    <rect x="142" y="246" width="24" height="26" fill="#685c40" /><rect x="175" y="316" width="111" height="10" fill="#2494d8" /><rect x="358" y="356" width="123" height="10" fill="#e93524" />
    <rect x="580" y="117" width="181" height="329" fill="#efeff0" stroke="#bbb" strokeWidth="4" /><rect x="580" y="117" width="181" height="21" fill="#fff" /><rect x="588" y="160" width="166" height="14" fill="#ddd" stroke="#bbb" /><rect x="588" y="193" width="166" height="15" fill="#a8d0f2" /><rect x="588" y="208" width="166" height="20" fill="#fff" /><rect x="588" y="227" width="166" height="11" fill="#0473d8" />
    <path d="M590 128h80M588 150h40M588 219h85M592 265h120M588 293h70M598 342h60M600 325h60" stroke="#777" strokeWidth="6" strokeDasharray="8 3" /><rect x="588" y="300" width="166" height="14" fill="#fff" /><path d="M642 409h52v14h-52zM702 409h52v14h-52z" fill="#c8d4e2" />
    <rect x="408" y="691" width="395" height="31" fill="#e4e5e6" /><rect x="663" y="695" width="98" height="23" fill="#1765d0" /><path d="M425 707h225M770 707h25" stroke="#888" strokeWidth="7" strokeDasharray="8 3" />
    <circle cx="560" cy="682" r="11" fill="#ddd" /><circle cx="606" cy="682" r="11" fill="#c22" /><path d="M62 695h18v12H62zM1050 690h20v18h-20z" fill="#ddd" /><circle cx="1139" cy="698" r="8" fill="#f08a1a" />
    <rect y="729" width="1211" height="28" fill="#cbdcec" /><rect x="35" y="730" width="247" height="26" fill="#fff" /><path d="M60 743h110" stroke="#777" strokeWidth="7" strokeDasharray="9 3" /><path d="M290 743h400" stroke="#47688c" strokeWidth="16" strokeDasharray="16 19" /><path d="M960 743h160M1140 737h45M1190 743h10" stroke="#56657a" strokeWidth="12" strokeDasharray="10 6" />
  </svg>
);

const innerApps: [ReactNode, boolean][] = [
  [<svg viewBox="0 0 16 16" className="size-[17px]"><circle cx="7" cy="8" r="7" fill="#f39a21" /><circle cx="9" cy="8" r="7" fill="#332a6b" /><path d="M2.500 6h13M2 8h14M2.500 10h13" stroke="#e8e8f4" /></svg>, false],
  [<ExplorerIcon className="w-[15px]" />, true],
  [<svg viewBox="0 0 18 16" className="w-[18px]"><path d="M0 6l9-6 9 6v10H0z" fill="#1573c4" /><path d="M2 5h14v5l-7 3-7-3z" fill="#dfeefa" /><path d="M0 7l9 5 9-5v9H0z" fill="#2796e0" /></svg>, false],
  [<EdgeIcon className="size-[17px]" />, false],
  [<FaFirefoxBrowser className="size-[17px]" fill="url(#foxFill)" />, true],
  [<Vbox className="w-[15px]" />, true],
  [<svg viewBox="0 0 16 16" className="size-[17px]"><path d="M8 0l7 4v8l-7 4-7-4V4z" fill="#9bcb3c" /><path d="M4 7.500a4 4 0 0 1 8 0zM4 8.500h8V12H4z" fill="#c3e07a" /><path d="M5.500 4.500L4.500 2.500M10.500 4.500l1-2" stroke="#6d9a22" /></svg>, false],
  [<svg viewBox="0 0 16 16" className="size-[17px]"><path d="M1 3v10c0 3.500 14 3.500 14 0V3z" fill="#a2a2a2" /><ellipse cx="8" cy="3" rx="7" ry="2.500" fill="#dcdcdc" /><path d="M1 6.500c1 3 13 3 14 0M1 10.500c1 3 13 3 14 0" stroke="#eee" fill="none" /></svg>, false],
  [<svg viewBox="0 0 16 16" className="size-[17px]"><rect width="16" height="16" fill="#2c1a1e" /><path d="M13.500 9.500a4.800 4.800 0 1 1-5-5q6 .3 6 6M8.500 4.500V13" fill="none" stroke="#e8404f" strokeWidth="2.600" /><path d="M0 0h7v3.500H0z" fill="#ddd" /></svg>, true],
  [<Chrome className="size-4" />, true],
  [<Chrome className="size-4" />, true],
];

const trayIcons: ReactNode[] = [
  <svg viewBox="0 0 12 12"><circle cx="6" cy="6" r="6" fill="#1f86d6" /><circle cx="4" cy="7" r="1.800" fill="none" stroke="#fff" /><circle cx="8" cy="5" r="1.800" fill="none" stroke="#fff" /></svg>,
  <svg viewBox="0 0 12 12" fill="none" stroke="#222"><path d="M3 9.500c-3 0-3-3-.7-3.500C3 3 7 2.500 8 5c4 0 4 4 1.500 4.500zM1 2l10 9" strokeWidth="1.200" /></svg>,
  <svg viewBox="0 0 12 12"><rect x="4" y="0" width="4.500" height="8" rx="1" fill="#111" /><path d="M3 6v3h6.500V6M6.200 9v2.500" stroke="#111" fill="none" /></svg>,
  <svg viewBox="0 0 12 12" fill="none" stroke="#222"><path d="M3.500 4V.7h4V4M2.500 4h6v7h-6zM8 9l1.500 2 2-3" /></svg>,
  <svg viewBox="0 0 12 12"><path d="M6 .7L11 2c0 5-2 8-5 9.500C3 10 1 7 1 2zM6 1v10M1.500 6h9" fill="none" stroke="#222" /><path d="M9 6.500l3 5.500H6z" fill="#f6b21b" /></svg>,
  <svg viewBox="0 0 12 12"><circle cx="7.500" cy="6.500" r="4" fill="#2386d0" /><rect y="3" width="6" height="4" fill="#9fc8e6" /><circle cx="7.500" cy="6.500" r="1.500" fill="#e6eef5" /></svg>,
  <svg viewBox="0 0 12 12" fill="none" stroke="#222"><path d="M0 4.500h1.500L4 2v8L1.500 7.500H0zM6 4.500q1 1.500 0 3M8 3q2 3 0 6M10 1.500q3 4.500 0 9" /></svg>,
  <svg viewBox="0 0 12 12" fill="none" stroke="#222"><path d="M3.500 3h8v6h-8zM7.500 9v2M5 11h5M0 1h3v3H0zM1.500 4v4H3" strokeWidth="1.100" /></svg>,
  <svg viewBox="0 0 12 12"><path d="M1 6h10v4H1z" fill="#333" /><path d="M2 2h4v3H2z" fill="#555" /><path d="M5 6l5-3v3z" fill="#ddd" /></svg>,
  <svg viewBox="0 0 12 12"><rect width="12" height="12" rx="1.500" fill="#1a74bd" /><circle cx="6" cy="5.500" r="3.500" fill="none" stroke="#8fd0f5" /><path d="M3 4l6 5" stroke="#e6c34a" /></svg>,
];

const SharedScreen = () => (
  <div className="relative h-full w-[1211px] shrink-0 overflow-hidden bg-[#474747]">
    <div className="flex flex-col">
      <div className="flex h-6 items-center justify-end bg-[#d9dcdf] text-[#222]">
        <span className="flex w-[33px] justify-center"><span className="flex size-[11px] items-center justify-center rounded-full bg-[#333]"><i className="border-x-[2.500px] border-t-[3px] border-x-transparent border-t-[#ccc]" /></span></span>
        <span className="flex w-[33px] justify-center"><Minus className="size-2.5" strokeWidth={1.500} /></span>
        <span className="flex w-[33px] justify-center"><svg viewBox="0 0 8 8" className="size-2" fill="none" stroke="#333"><path d="M.5 2h5.500v5.500H.5zM2 2V.5h5.500V6H6" strokeWidth=".9" /></svg></span>
        <span className="flex w-[33px] justify-center"><X className="size-[11px]" strokeWidth={1.500} /></span>
      </div>
      <div className="flex h-[27px] items-center justify-end border-b border-[#ddd] bg-[#f6f7f7] pr-1 text-[#444]">
        <div className="mr-1 flex h-5 w-[900px] items-center justify-end rounded-full bg-[#eceded] pr-[2px]">
          <span className="flex w-[23px] justify-center"><MdVideocam className="size-3" /></span>
          <span className="flex w-[23px] justify-center"><MdVpnKey className="size-[11px]" /></span>
          <span className="flex w-[23px] justify-center"><MdStarBorder className="size-3" /></span>
        </div>
        <span className="flex w-[23px] justify-center"><MdExtension className="size-3" /></span>
        <span className="flex w-[23px] justify-center"><svg viewBox="0 0 16 16" className="size-4"><circle cx="8" cy="8" r="8" fill="#e9e6e2" /><path d="M3.500 14C3 5 5 1 8 1s5.500 4 4.500 13z" fill="#3a1a18" /><ellipse cx="8" cy="7" rx="2.500" ry="3.600" fill="#f0b79f" /><path d="M4 14.500c1-3 7-3 8 0z" fill="#1f1b22" /></svg></span>
        <span className="flex w-6 justify-center"><MdMoreVert className="size-3.5" /></span>
      </div>
      <div className="h-[76px] bg-gradient-to-b from-[#292929] to-[#474747]" />
    </div>
    <div className="absolute inset-x-0 bottom-[29px] h-[150px] bg-gradient-to-b from-[#474747]/0 via-[#333]/80 to-[#1d1d1d]" />
    <div className="absolute left-0 top-[128.500px] flex w-full flex-col items-center gap-[7px]">
      <div className="flex gap-[7px]"><Tile icons={false} /><Tile icons={false} /><Tile icons={false} /><Tile text="GQ" color="bg-[#63303f]" /></div>
      <div className="flex gap-[7px]"><Tile icons={false} /><Tile icons={false} /><Tile icons={false} /><Tile text="JV" color="bg-[#606233]" /></div>
      <div className="flex gap-[7px]"><Tile icons={false} /><Tile icons={false} /><Tile icons={false} color="bg-[#2a5f55]" /><Tile text="JP" color="bg-[#63303f]" /></div>
      <div className="flex gap-[7px]">
        <Tile text="AR" color="bg-[#333766]" />
        <div className="relative flex h-[125.500px] w-[223px] justify-center rounded bg-black pr-[2px] shadow-[0_0_0_2px_#1f5fc4,0_0_5px_3px_#174a9c]">
          <Thumbnail />
          <span className="absolute left-1 top-1 flex size-[15px] items-center justify-center rounded-full border border-white bg-[#1560d0]"><svg viewBox="0 0 10 8" className="w-2"><path d="M0 2h3v3.500H2.500L3 8H1.500L1 5.500H0zM4 2l2.500-1.800v7L4 5.500zM8 2.500q1.500 1.200 0 2.500" fill="#fff" /></svg></span>
        </div>
      </div>
    </div>
    <Explorer />
    <FormatDialog />
    <svg viewBox="0 0 9 14" className="absolute left-[775px] top-[105px] w-[9px]"><path d="M.7.800v10.500l2.500-2.200 1.800 4 1.600-.8-1.800-3.800h3.400z" fill="#fff" stroke="#222" strokeWidth=".7" /></svg>

    <div className="absolute left-0 top-[683px] flex h-[29px] w-full justify-between pl-4 pr-[17px] text-[#d8d8d8]">
      <div className="flex">
        <span className="relative flex w-[31px] items-center justify-center"><ChatIcon className="w-[15px]" /><span className="absolute -bottom-[5px] -right-[8px] flex size-[14px] items-center justify-center rounded-full bg-[#1a5fc8] font-['Liberation_Sans',sans-serif] text-[8px] font-bold text-white">1</span></span>
        <span className="ml-[11px] flex w-7 items-center justify-center rounded bg-[#3d3d3d]"><ScreenIcon className="w-4" /></span>
        <span className="ml-3 flex w-7 items-center justify-center"><MdPanTool className="size-[17px]" /></span>
      </div>
      <div className="flex gap-[11.500px]">
        <span className="flex w-[29px] items-center justify-center rounded bg-[#3d3d3d]"><TilesIcon className="w-[18px]" /></span>
        <span className="flex w-[29px] items-center justify-center"><InviteIcon className="w-[15px]" /></span>
        <span className="flex w-[29px] items-center justify-center"><Shield className="w-[13px]" /></span>
        <span className="flex w-[29px] items-center justify-center"><MdMoreVert className="size-[18px]" /></span>
      </div>
    </div>
    <div className="absolute left-[545px] top-[686px] flex gap-5"><i className="size-[27px] rounded-full bg-white" /><i className="size-[27px] rounded-full bg-[#cf2a1e]" /><i className="size-[27px] rounded-full bg-[#2a3a4b]" /></div>
    <div className="absolute left-[408px] top-[691px] flex h-[31px] w-[395px] items-center bg-[#e9e9eb] text-[9.500px] text-[#333]">
      <span className="ml-[7px] flex gap-[3px]"><i className="h-2 w-px bg-[#888]" /><i className="h-2 w-px bg-[#888]" /></span>
      <T w={229} className="ml-[7px]">jitsimeet03.educa.madrid.org está compartiendo tu pantalla.</T>
      <div className="absolute left-[255px] top-1 flex h-[23px] w-[98px] items-center justify-center rounded-sm bg-[#1a6be0] font-semibold text-white"><T w={80}>Dejar de compartir</T></div>
      <T w={28} className="absolute left-[360px] text-[#2a68c8]">Ocultar</T>
    </div>
    <div className="absolute bottom-0 left-0 flex h-[29px] w-full items-center bg-[#b9cadb]">
      <span className="flex w-[35px] justify-center"><WinLogo className="size-3" fill="#000" /></span>
      <div className="flex h-full w-[247px] items-center bg-[#f4f4f4] pl-2 text-[10.500px] text-[#333]"><Search className="size-3" /><T w={117} className="ml-[9px]">Escribe aquí para buscar</T></div>
      <span className="flex w-[37px] justify-center"><TaskView className="size-3" stroke="#111" /></span>
      {innerApps.map(([icon, open], i) => (
        <span key={i} className={`flex h-full w-[35.300px] items-center justify-center ${i === 1 ? "bg-[#e6eef5]" : ""} ${open ? "border-b-2 border-[#2b7fc4]" : ""}`}>{icon}</span>
      ))}
      <div className="ml-auto flex h-full items-center">
        {trayIcons.map((icon, i) => <span key={i} className="w-[17.300px] px-[2.600px]">{icon}</span>)}
        <div className="flex w-[50px] flex-col items-center pb-px text-[9px] leading-[13px] text-black"><T w={20} drop={false}>17:22</T><T w={41} drop={false}>12/04/2021</T></div>
        <span className="flex w-[30px] justify-center"><svg viewBox="0 0 12 12" className="size-[13px]"><path d="M0 0h12v9H9v3L6 9H0z" fill="#111" /><path d="M2 3h8M2 5h8M2 7h5" stroke="#b9cadb" strokeWidth=".8" /></svg></span>
        <i className="h-full w-[9px] border-l border-[#8a9bb0]" />
      </div>
    </div>
  </div>
);

/* ---------- meeting ---------- */

const people: [string, string, string][] = [
  ["RM", "bg-[#2a5f50]", "mc"], ["GQ", "bg-[#5e2a3c]", "mc"], ["MV", "bg-[#5e2a3c]", "cs"], ["MA", "bg-[#5e6130]", "mc"], ["VB", "bg-[#664c2c]", "mcs"],
];
const Status = ({ flags, className = "" }: { flags: string; className?: string }) => (
  <div className={`absolute flex text-white ${className} ${flags.includes("s") ? "right-[2px]" : "right-[7px]"}`}>
    {flags.includes("m") && <span className="flex w-[17px] justify-center"><MdMicOff className="size-3" /></span>}
    {flags.includes("c") && <span className="flex w-[17px] justify-center"><MdVideocamOff className="size-[13px]" /></span>}
    {flags.includes("s") && <span className="flex w-[17px] justify-center"><MdStarBorder className="size-[13px]" /></span>}
  </div>
);

const Meeting = () => (
  <div className="relative flex h-[757px] shrink-0 overflow-hidden font-['Liberation_Sans',sans-serif]">
    <div className="h-full w-[125px] shrink-0 bg-[linear-gradient(to_bottom,rgba(70,75,78,0.7),rgba(255,255,255,0)_150px,rgba(190,200,206,0.25)_400px,rgba(255,255,255,0)_560px,rgba(0,0,0,0.72)_757px),linear-gradient(to_right,#878986,#b7b9b7_28px,#d6d8d8_62px,#eceeed_104px,#dfe1e0_120px,#c8c8c8)]" />
    <div className="h-full shrink-0 font-['Noto_Sans',sans-serif]"><SharedScreen /></div>
    <div className="h-full flex-1 bg-[radial-gradient(ellipse_95px_180px_at_28px_265px,#0d0b0c,rgba(13,11,12,0.75)_35%,rgba(13,11,12,0)),radial-gradient(ellipse_80px_300px_at_12px_560px,#0e0c0c,rgba(14,12,12,0)),linear-gradient(to_right,rgba(0,0,0,0.3),rgba(0,0,0,0)_20px),linear-gradient(to_left,rgba(0,0,0,0.25),rgba(0,0,0,0)_70px),linear-gradient(to_bottom,#8f9292,#989b99_50px,#808281_80px,#525252_116px,#454545_200px,#424242_400px,#3b3b3b_560px,#3c3c3c)]" />
    <div className="absolute inset-x-0 top-0 h-[104px] bg-gradient-to-b from-black/52 to-black/0" />
    <div className="absolute inset-x-0 bottom-0 h-[160px] bg-gradient-to-b from-black/0 to-black/55" />

    <div className="absolute left-[22px] top-[34px] flex items-center text-white/60">
      <div className="flex h-[31px] w-[30px] items-center justify-center border border-white/70 bg-[#c00d12] text-white/90">
        <svg viewBox="0 0 24 9" className="w-6" fill="currentColor">{[2, 5.500, 9, 12.500, 16, 19.500, 22.500].map((x, i) => <path key={x} d={`M${x} ${i % 2 ? 4 : 0.500}l.7 1.500 1.600.2-1.200 1.100.3 1.700-1.400-.8-1.400.8.3-1.700-1.200-1.100 1.600-.2z`} />)}</svg>
      </div>
      <svg viewBox="0 0 32 32" className="ml-1.5 w-8" fill="none" stroke="currentColor" strokeWidth="3"><path d="M22 3a14 14 0 1 0 7 8M5 10a13 13 0 0 1 20-4" /><path d="M16 8l2 5 6 1-5 4 1 6-5-3-6 2 2-6-3-5h6z" strokeWidth="2.500" /></svg>
      <div className="ml-[5px] flex flex-col items-start">
        <T w={61} drop={false} className="text-[14px] leading-[17px]">Jitsi Meet</T>
        <T w={138} drop={false} className="text-[20px] font-bold leading-[18px] [-webkit-text-stroke:0.600px]">EducaMadrid</T>
      </div>
    </div>

    <div className="absolute left-[703px] top-[25px] flex items-center text-white">
      <T w={123} drop={false} className="-mt-1 text-[17px]">SMR Vespertino</T>
      <div className="ml-4 flex h-7 w-[55px] items-center justify-center gap-2 rounded bg-white text-[13px] text-[#5e6d7a]">
        <span>14</span>
        <svg viewBox="0 0 16 15" className="w-[15px]" fill="none" stroke="currentColor" strokeWidth="1.300"><circle cx="8" cy="5" r="2.200" /><path d="M4.500 13.500v-3q0-2.500 3.500-2.500t3.500 2.500v3zM5.500 4.500A2 2 0 1 1 6 1.500M10.500 4.500A2 2 0 1 0 10 1.500M4 11H1.200V8Q1.200 6 3.500 5.500M12 11h2.800V8q0-2-2.300-2.500" /></svg>
      </div>
    </div>
    <div className="absolute left-[1410px] top-[30px] flex size-10 items-center justify-center rounded-full bg-[#8993a8] pb-px text-[13.500px] font-bold text-[#c2c5ca]">HD</div>

    <div className="absolute left-[1462px] top-[19px] flex w-[120px] flex-col">
      <div className="relative flex h-[68px] items-center justify-center rounded bg-black">
        <div className="flex size-[34px] items-center justify-center rounded-full bg-[#1d4a3e] text-[17.500px] text-[#8ea49d]">NO</div>
        <Status flags="mc" className="bottom-[5px]" />
      </div>
      <div className="mt-[7px] flex h-[561px] flex-col gap-1 overflow-hidden">
        {people.map(([name, color, flags], i) => (
          <div key={name} className={`relative flex h-[120px] shrink-0 items-center justify-center rounded bg-black ${i === 0 ? "-mt-[55px]" : ""}`}>
            <div className={`flex size-[60px] items-center justify-center rounded-full text-[31px] text-white/65 ${color}`}>{name}</div>
            <MdMoreVert className="absolute bottom-[6px] left-[2px] size-3.5 text-white" />
            <Status flags={flags} className="bottom-1" />
          </div>
        ))}
      </div>
    </div>
    <i className="absolute left-[1586px] top-[458px] h-[198px] w-[7px] rounded-full bg-[#1d1d1d]" />
    <MdChevronRight className="absolute left-[1576px] top-[657px] size-5 text-white" />

    <div className="absolute left-[34px] top-[702px] flex items-center text-white">
      <ChatIcon className="w-5" /><ScreenIcon className="ml-[35px] w-[22px]" /><MdPanTool className="-mt-px ml-[33px] size-6" />
    </div>
    <div className="absolute left-[1376px] top-[703px] flex h-6 items-center text-white">
      <TilesIcon className="w-6" /><InviteIcon className="ml-[35px] w-5" /><Shield className="ml-[35px] w-5" /><MdMoreVert className="ml-8 size-7" />
    </div>

    <div className="absolute left-[647px] top-[667px] flex h-[20px] w-[175px] items-center justify-center rounded-sm bg-[#0e1626] text-[12px] text-[#b8c7e0]"><T w={163} drop={false}>Activar o silenciar el micrófono</T></div>
    <div className="absolute left-[715px] top-[694px] flex items-center text-white">
      <div className="relative flex size-10 items-center justify-center rounded-full bg-[#5a6b7a]">
        <MdMicOff className="size-[23px]" />
        <span className="absolute -bottom-[1px] -right-2 flex size-[18px] items-center justify-center rounded-full bg-white text-[#4a5a6a]"><MdKeyboardArrowDown className="size-3.5" /></span>
      </div>
      <div className="ml-6 flex size-[42px] items-center justify-center rounded-full bg-[#c12018]"><MdCallEnd className="size-[26px]" /></div>
      <div className="relative ml-6 flex size-10 items-center justify-center rounded-full border border-[#4c5d6e] bg-[#293949]">
        <MdVideocamOff className="size-[23px]" />
        <span className="absolute -bottom-[2px] -right-[9px] flex size-[18px] items-center justify-center rounded-full bg-[#a0b5d0] text-[#4a5a6a]"><MdKeyboardArrowDown className="size-3.5" /></span>
      </div>
    </div>

    <div className="absolute left-[1258px] top-[670px] flex flex-col items-start font-['Noto_Sans',sans-serif] text-[#9a9a9a]/90">
      <T w={147} drop={false} className="text-[19px] leading-[27px]">Activar Windows</T>
      <T w={276} className="text-[14.500px] leading-[19px]">Ve a Configuración para activar Windows.</T>
    </div>
  </div>
);

/* ---------- taskbar ---------- */

const Taskbar = () => (
  <div className="flex h-10 shrink-0 bg-[linear-gradient(to_right,#262735,#2b2733_300px,#3f222b_410px,#4b2020_500px,#3c2427_590px,#30292d_690px,#3e3035_840px,#2a262b_990px,#22222e_1200px,#1d1e23_1400px,#1c1d1f)]">
    <span className="flex w-12 items-center justify-center"><WinLogo className="size-4" /></span>
    <div className="flex w-[344px] items-center border border-[#bbb] bg-[#f2f2f2] pl-[11px] text-[15.500px] text-[#333]"><Search className="size-[17px]" /><T w={161} className="ml-[11px]">Escribe aquí para buscar</T></div>
    <span className="flex w-12 items-center justify-center"><i className="size-[15px] rounded-full border-[2.500px] border-white" /></span>
    <span className="flex w-12 items-center justify-center"><TaskView className="size-4" /></span>
    <div className="ml-[7px] flex w-10 items-center justify-center border-b-2 border-[#76b9ed]"><ExplorerIcon className="w-[22px]" /></div>
    <div className="ml-[5px] flex w-12 items-center justify-center border-b-2 border-[#76b9ed] bg-[#715455]"><EdgeIcon className="size-6" /></div>
    <div className="ml-[5px] flex w-10 items-center justify-center border-b-2 border-[#76b9ed]">
      <svg viewBox="0 0 24 22" className="w-6"><rect x="5" width="19" height="22" rx="1" fill="#2b7cd3" /><path d="M5 0h19v6H5z" fill="#41a5ee" /><path d="M5 15h19v7H5z" fill="#103f91" /><rect y="5" width="12" height="12" rx="1" fill="#185abd" /><path d="M2.500 8l1.600 6.200L6 8.600l1.900 5.600L9.500 8" fill="none" stroke="#fff" strokeWidth="1.500" /></svg>
    </div>
    <div className="ml-2 flex w-10 items-center justify-center border-b-2 border-[#76b9ed]">
      <svg viewBox="0 0 24 24" className="w-6"><path d="M9 4l9-3 5 3-1 7-8 2-5-3z" fill="#e0a92c" /><path d="M9 4l6 4 8-4" stroke="#7c5710" fill="none" /><circle cx="8" cy="13" r="7" fill="#8f9490" stroke="#5a5f5c" /><path d="M8 8h7v8H8z" fill="#1d4d24" stroke="#36b64a" strokeDasharray="1.500 1" /><path d="M12.500 18.500L18 23.500" stroke="#555" strokeWidth="2" /></svg>
    </div>
    <div className="ml-2 flex w-10 items-center justify-center border-b-2 border-[#76b9ed]"><Vbox className="w-5" /></div>
    <div className="ml-auto flex items-center text-white">
      <span className="flex w-6 justify-center"><ChevronUp className="size-[17px]" strokeWidth={1.500} /></span>
      <span className="flex w-6 justify-center"><svg viewBox="0 0 12 16" className="h-4" fill="none" stroke="#fff"><path d="M1 5h7v6H1zM8 7l3-1.500v5L8 9M2 2.500q4-3 8 0M2 13.500q4 3 8 0" /></svg></span>
      <span className="flex w-[23px] justify-center"><svg viewBox="0 0 12 16" className="h-4"><rect x="2.500" width="7" height="11.500" rx="1" fill="#fff" /><path d="M.7 9v3.500h10.600V9M6 12.500V15M3.500 15.300h5" fill="none" stroke="#fff" /></svg></span>
      <span className="flex w-[26px] justify-center"><svg viewBox="0 0 17 17" className="w-[17px]" fill="none" stroke="#fff"><path d="M.7 3l15-2v9M.7 3v9.500l7 1" strokeWidth="1.200" /><path d="M5.500 7A3 3 0 0 1 11 5.500M11 8.500A3 3 0 0 1 5.500 10M11.500 3.500v2.500H9M5 11.500V9h2.500" /><circle cx="12.500" cy="13" r="3.600" fill="#f7941d" stroke="none" /></svg></span>
      <span className="flex w-6 justify-center"><svg viewBox="0 0 14 14" className="w-[13px]" fill="none" stroke="#ddd" strokeWidth="1.200"><path d="M1 12A11 11 0 0 1 13 1M4 13A9 9 0 0 1 13 4.500M7 13.500A6 6 0 0 1 13 8" /><circle cx="12" cy="12.500" r="1.200" fill="#fff" stroke="none" /></svg></span>
      <div className="mx-[5px] flex w-[58px] flex-col items-center text-[12px] leading-[18px]"><T w={27} drop={false}>17:22</T><T w={57} drop={false}>12/04/2021</T></div>
      <span className="ml-1.5 flex w-8 justify-center"><svg viewBox="0 0 16 16" className="w-4"><path d="M0 0h16v12.500h-5.500L8 16l-2.500-3.500H0z" fill="#fff" /><path d="M3 3.500h10M3 6.500h10M3 9.500h6" stroke="#222" /></svg></span>
      <i className="ml-3 h-10 w-[5px] border-l border-[#777]" />
    </div>
  </div>
);

export default function App() {
  return (
    <div className="flex h-[900px] w-[1600px] flex-col overflow-hidden bg-[#f7f7f7] font-['Noto_Sans',sans-serif] [text-rendering:geometricPrecision]">
      <svg className="absolute size-0">
        <defs>
          <linearGradient id="edgeFill" x1="0" y1="1" x2="1" y2="0"><stop offset="0" stopColor="#0f59b0" /><stop offset=".55" stopColor="#1fa0e0" /><stop offset="1" stopColor="#5fe06a" /></linearGradient>
          <linearGradient id="foxFill" x1="0" y1="1" x2="1" y2="0"><stop offset="0" stopColor="#e8304a" /><stop offset=".6" stopColor="#ff8a1e" /><stop offset="1" stopColor="#ffd83a" /></linearGradient>
          <linearGradient id="thumbShade" x1="0" y1="0" x2="0" y2="1"><stop offset="0" stopColor="#474747" /><stop offset="1" stopColor="#1a1a1a" /></linearGradient>
        </defs>
      </svg>
      <TabStrip />
      <Toolbar />
      <Bookmarks />
      <div className="h-px shrink-0 bg-[#d0d0d0]" />
      <Meeting />
      <Taskbar />
    </div>
  );
}
